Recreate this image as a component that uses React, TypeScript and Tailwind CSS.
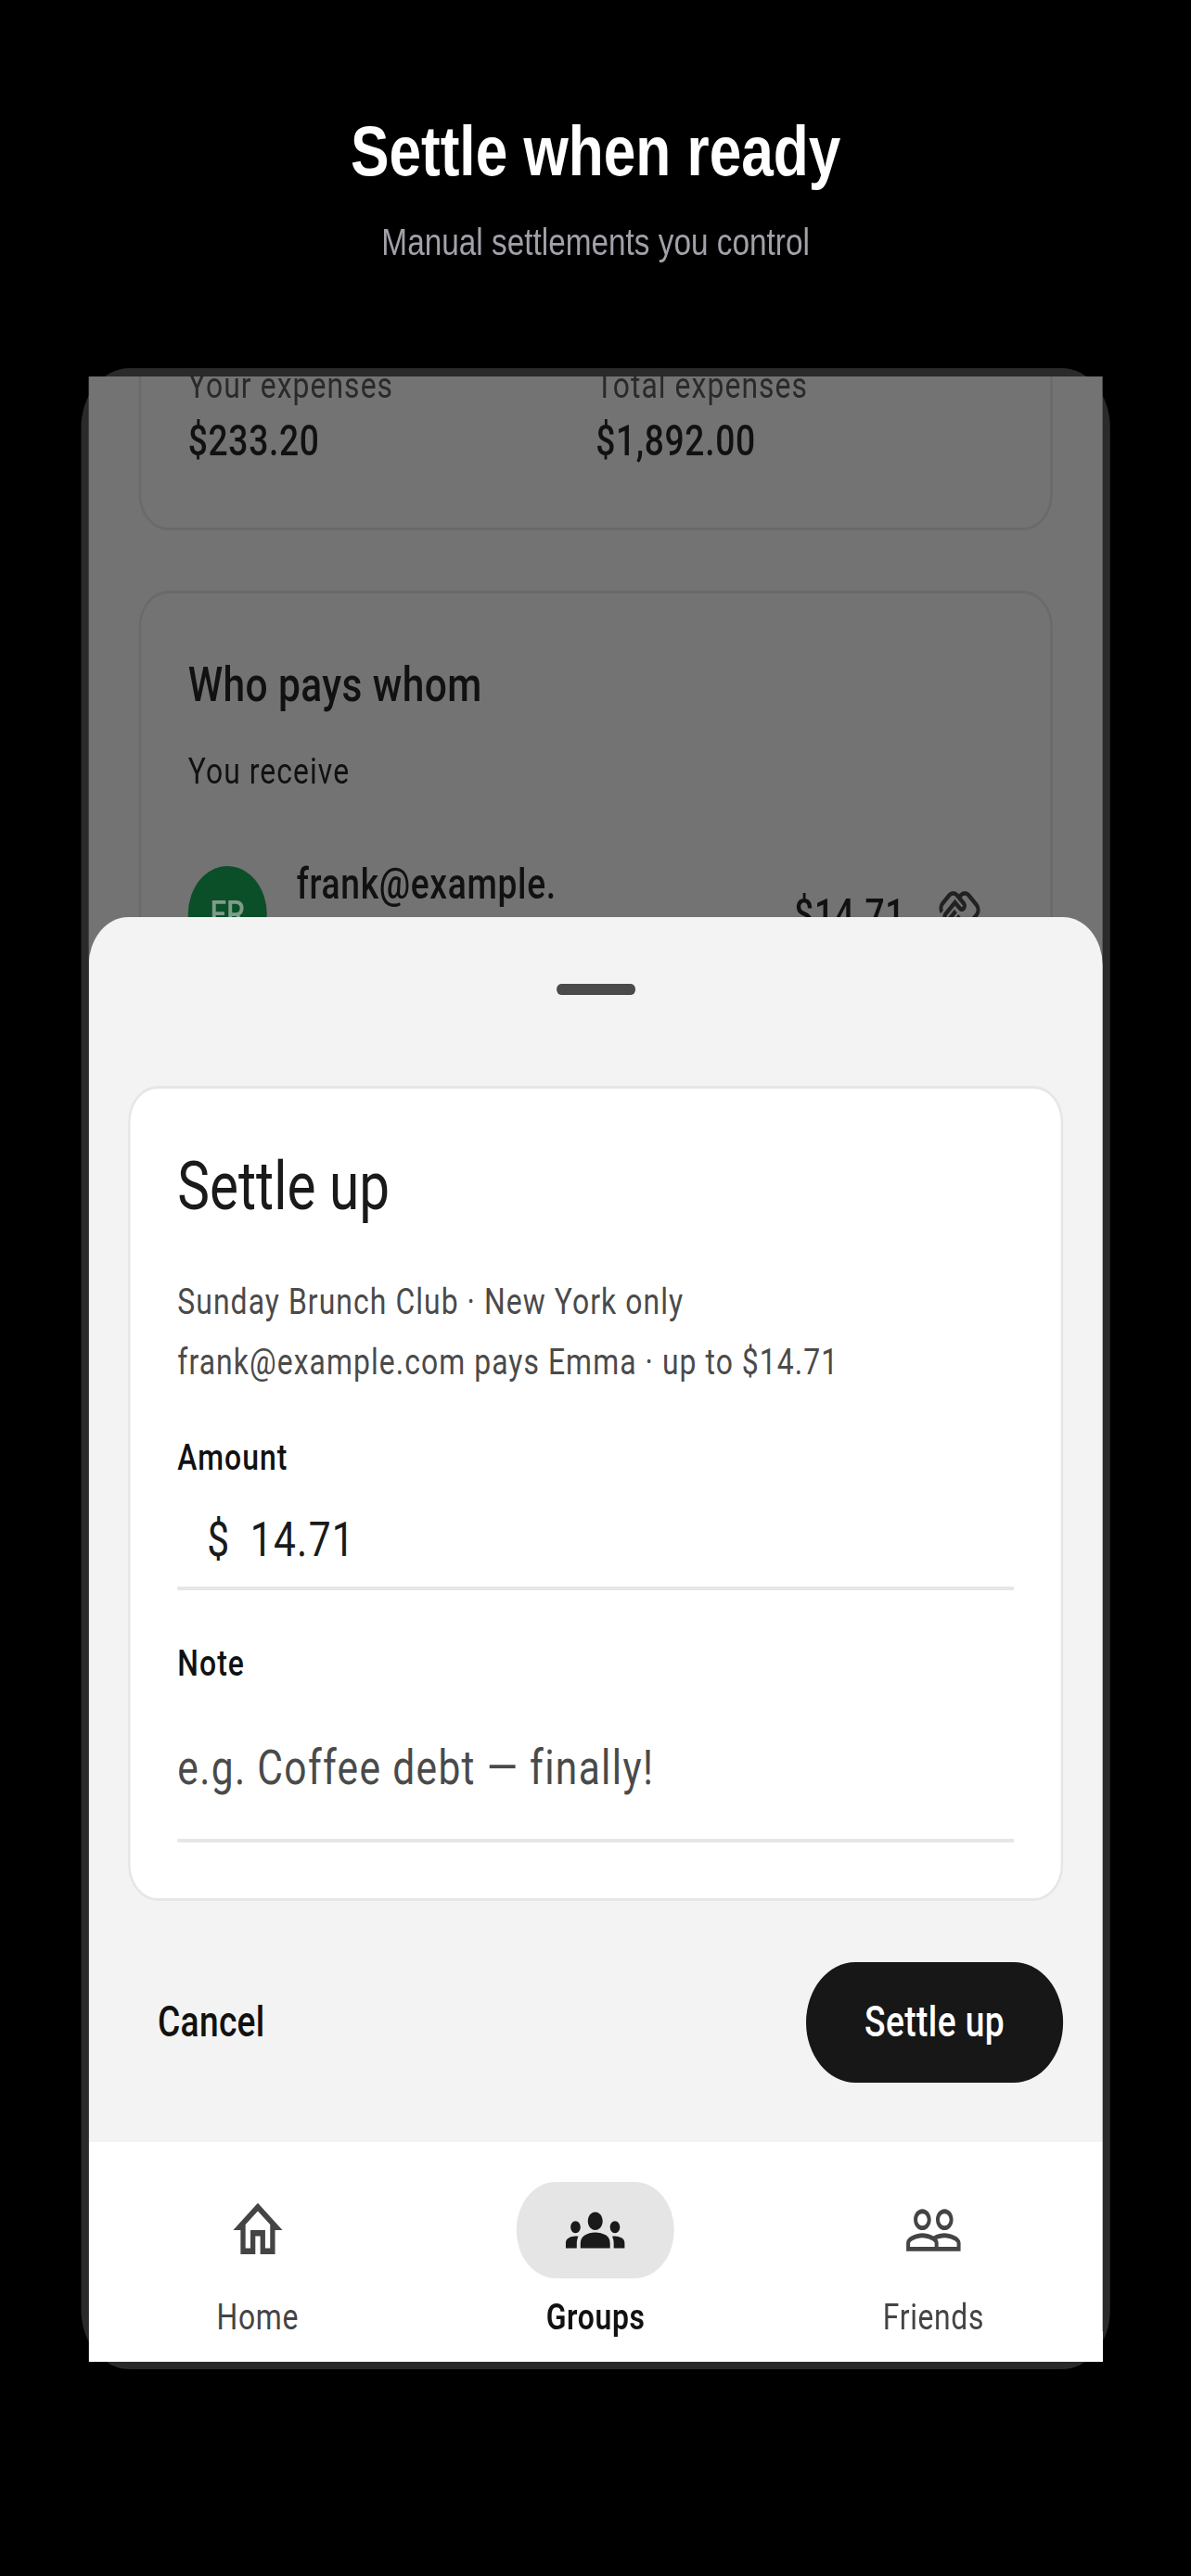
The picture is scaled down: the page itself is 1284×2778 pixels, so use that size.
import { MdGroups, MdOutlineHandshake, MdOutlineHome, MdPeopleOutline } from "react-icons/md";

function NavItem({ label, active, children }: { label: string; active?: boolean; children: React.ReactNode }) {
  return (
    <div className="flex flex-col items-center pt-[43px]">
      <div className={`flex h-[104px] w-[208px] items-center justify-center rounded-[52px] ${active ? "bg-[#e5e5e5] text-[#1a1a1a]" : "text-[#444444]"}`}>
        {children}
      </div>
      <div className={`mt-[16px] text-[39px] leading-[52px] tracking-[0.8px] ${active ? "font-semibold text-[#111111]" : "text-[#444444]"}`}>{label}</div>
    </div>
  );
}

export default function App() {
  return (
    <div className="h-[2778px] w-full overflow-hidden bg-black">
      <div className="w-[1571px] origin-top-left scale-x-[0.8175] font-['Roboto',sans-serif]">
        <header className="flex h-[397px] flex-col items-center pt-[117px] font-['Liberation_Sans',sans-serif]">
          <h1 className="text-[76px] leading-[92px] font-bold text-white">Settle when ready</h1>
          <p className="mt-[28px] text-[40.8px] leading-[48px] text-[#a1a1aa]">Manual settlements you control</p>
        </header>

        <div className="mx-auto w-[1357px] rounded-[64px] bg-[#2a2a2a] px-[10px] pt-[9px] pb-[8px]">
          <div className="relative h-[2141px] w-[1337px] overflow-hidden bg-[#737373] text-[#111111]">
            <div className="px-[66px]">
              <section className="-mt-[98px] rounded-[39px] border-[3px] border-[#6a6a6a] px-[62px] pt-[79px] pb-[63px]">
                <div className="grid grid-cols-2">
                  <div>
                    <div className="text-[39px] leading-[52px] tracking-[1.3px] text-[#2a2a2a]">Your expenses</div>
                    <div className="mt-[4px] text-[45.5px] leading-[60px] font-medium tracking-[0.81px]">$233.20</div>
                  </div>
                  <div>
                    <div className="text-[39px] leading-[52px] tracking-[1.3px] text-[#2a2a2a]">Total expenses</div>
                    <div className="mt-[4px] text-[45.5px] leading-[60px] font-medium tracking-[0.81px]">$1,892.00</div>
                  </div>
                </div>
              </section>

              <section className="mt-[65px] rounded-[39px] border-[3px] border-[#6a6a6a] px-[62px] pt-[65px] pb-[60px]">
                <h2 className="text-[52px] leading-[68px] font-medium tracking-[0.49px]">Who pays whom</h2>
                <p className="mt-[33px] text-[39px] leading-[52px] tracking-[1.3px]">You receive</p>
                <div className="mt-[66px] flex items-start">
                  <div className="mt-[10px] flex h-[104px] w-[104px] shrink-0 items-center justify-center rounded-full bg-[#0a4f28] text-[39px] font-medium text-[#7f9c8a]">FR</div>
                  <div className="ml-[39px] w-[355px] text-[45.5px] leading-[60px] font-medium tracking-[0.81px] break-all">frank@example.com</div>
                  <div className="mt-[33px] ml-auto text-[45.5px] leading-[60px] font-medium tracking-[0.81px]">$14.71</div>
                  <MdOutlineHandshake className="mt-[32px] mr-[28px] ml-[42px] h-[59px] w-[59px] text-[#222222]" />
                </div>
              </section>
            </div>

            <div className="absolute inset-x-0 bottom-0">
              <div className="rounded-t-[52px] bg-[#f3f3f3] px-[52px] pt-[72px] pb-[64px]">
                <div className="mx-auto h-[12px] w-[104px] rounded-[6px] bg-[#4a4a4a]" />
                <div className="mt-[98px] rounded-[39px] border-[3px] border-[#e6e6e6] bg-white px-[62px] pt-[60px] pb-[60px]">
                  <h3 className="text-[71.5px] leading-[92px] text-[#1a1a1a]">Settle up</h3>
                  <p className="mt-[46px] text-[39px] leading-[65px] tracking-[1.3px] text-[#4a4a4a]">
                    Sunday Brunch Club · New York only
                    <br />
                    frank@example.com pays Emma · up to $14.71
                  </p>
                  <div className="mt-[46px] text-[39px] leading-[48px] font-medium tracking-[1.3px] text-[#111111]">Amount</div>
                  <div className="border-b-4 border-[#e6e6e6] pt-[31px] pb-[16px] pl-[39px] text-[52px] leading-[68px] tracking-[1.625px] text-[#1a1a1a]">
                    <span className="mr-[26px]">$</span>14.71
                  </div>
                  <div className="mt-[55px] text-[39px] leading-[48px] font-medium tracking-[1.3px] text-[#111111]">Note</div>
                  <div className="border-b-4 border-[#e6e6e6] pt-[55px] pb-[42px] text-[52px] leading-[68px] tracking-[1.625px] text-[#4a4a4a]">e.g. Coffee debt — finally!</div>
                </div>
                <div className="mt-[66px] flex items-center justify-between">
                  <div className="pl-[39px] text-[45.5px] leading-[60px] font-medium tracking-[0.33px] text-[#111111]">Cancel</div>
                  <div className="flex h-[130px] w-[339px] items-center justify-center rounded-[65px] bg-[#171717] text-[45.5px] leading-[60px] font-medium tracking-[0.5px] text-white">Settle up</div>
                </div>
              </div>
              <nav className="grid h-[237px] grid-cols-3 bg-white">
                <NavItem label="Home"><MdOutlineHome className="h-[78px] w-[78px]" /></NavItem>
                <NavItem label="Groups" active><MdGroups className="h-[78px] w-[78px]" /></NavItem>
                <NavItem label="Friends"><MdPeopleOutline className="h-[78px] w-[78px]" /></NavItem>
              </nav>
            </div>
          </div>
        </div>
      </div>
    </div>
  );
}
